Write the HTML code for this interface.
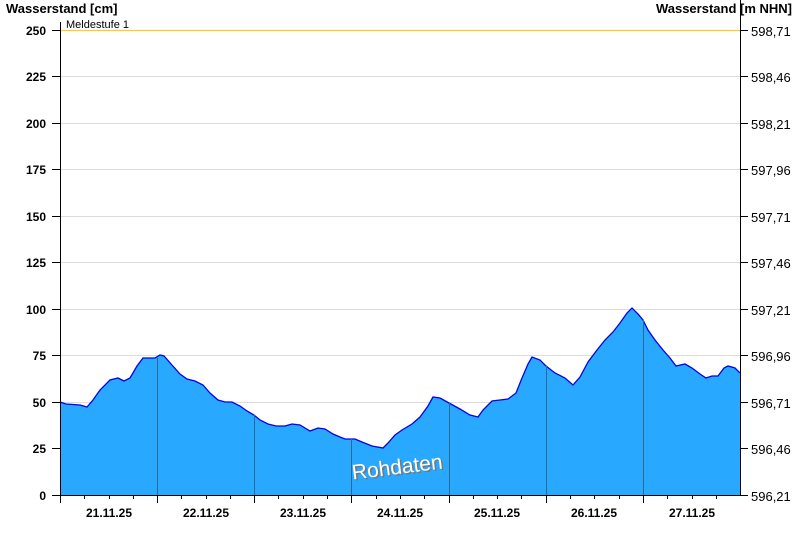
<!DOCTYPE html>
<html><head><meta charset="utf-8"><style>
html,body{margin:0;padding:0;background:#fff;width:800px;height:550px;overflow:hidden}
svg text{font-family:"Liberation Sans",Arial,sans-serif}
</style></head><body>
<svg width="800" height="550" viewBox="0 0 800 550" xmlns="http://www.w3.org/2000/svg">
<g stroke="#dcdcdc" stroke-width="1">
<line x1="60" y1="76.5" x2="740" y2="76.5"/><line x1="60" y1="123.5" x2="740" y2="123.5"/>
<line x1="60" y1="169.5" x2="740" y2="169.5"/><line x1="60" y1="216.5" x2="740" y2="216.5"/>
<line x1="60" y1="262.5" x2="740" y2="262.5"/><line x1="60" y1="309.5" x2="740" y2="309.5"/>
<line x1="60" y1="355.5" x2="740" y2="355.5"/><line x1="60" y1="402.5" x2="740" y2="402.5"/>
<line x1="60" y1="448.5" x2="740" y2="448.5"/>
</g>
<polygon fill="#29a8ff" stroke="none" points="60,495 60,402 66,404 80,405 87,407 93,400 100,390 110,380 118,378 124,381 130,378 137,366 143,358 148,358 155,358 160,355 164,356 172,365 180,374 187,379 195,381 203,385 210,393 218,400 225,402 232,402 240,406 247,411 254,415 260,420 268,424 276,426 285,426 292,424 300,425 310,431 318,428 325,429 333,434 340,437 345,439 355,439 362,442 372,446 383,448 388,443 395,435 402,430 412,424 420,417 428,406 433,397 440,398 449,403 460,409 470,415 478,417 483,410 492,401 500,400 508,399 516,393 522,378 528,364 532,357 540,360 546,366 555,373 565,378 573,385 580,377 588,362 597,350 605,340 613,332 620,323 627,313 632,308 638,314 643,320 648,330 655,340 663,350 670,358 676,366 685,364 692,368 700,374 706,378 712,376 718,376 724,368 728,366 735,368 740,373 740,495"/>
<polyline fill="none" stroke="#0000ee" stroke-width="1.3" points="60,402 66,404 80,405 87,407 93,400 100,390 110,380 118,378 124,381 130,378 137,366 143,358 148,358 155,358 160,355 164,356 172,365 180,374 187,379 195,381 203,385 210,393 218,400 225,402 232,402 240,406 247,411 254,415 260,420 268,424 276,426 285,426 292,424 300,425 310,431 318,428 325,429 333,434 340,437 345,439 355,439 362,442 372,446 383,448 388,443 395,435 402,430 412,424 420,417 428,406 433,397 440,398 449,403 460,409 470,415 478,417 483,410 492,401 500,400 508,399 516,393 522,378 528,364 532,357 540,360 546,366 555,373 565,378 573,385 580,377 588,362 597,350 605,340 613,332 620,323 627,313 632,308 638,314 643,320 648,330 655,340 663,350 670,358 676,366 685,364 692,368 700,374 706,378 712,376 718,376 724,368 728,366 735,368 740,373"/>
<g stroke="#2a6a94" stroke-width="1">
<line x1="157.5" y1="358" x2="157.5" y2="495"/><line x1="254.5" y1="415" x2="254.5" y2="495"/>
<line x1="351.5" y1="439" x2="351.5" y2="495"/><line x1="449.5" y1="403" x2="449.5" y2="495"/>
<line x1="546.5" y1="366" x2="546.5" y2="495"/><line x1="643.5" y1="320" x2="643.5" y2="495"/>
</g>
<line x1="60" y1="30.5" x2="740" y2="30.5" stroke="#ffcc22" stroke-width="1.2"/>
<g stroke="#000" stroke-width="1">
<line x1="60.5" y1="22" x2="60.5" y2="496"/><line x1="740.5" y1="0" x2="740.5" y2="496"/>
<line x1="52" y1="495.5" x2="748" y2="495.5"/>
<line x1="52" y1="30.5" x2="60" y2="30.5"/><line x1="52" y1="76.5" x2="60" y2="76.5"/><line x1="52" y1="123.5" x2="60" y2="123.5"/><line x1="52" y1="169.5" x2="60" y2="169.5"/><line x1="52" y1="216.5" x2="60" y2="216.5"/><line x1="52" y1="262.5" x2="60" y2="262.5"/><line x1="52" y1="309.5" x2="60" y2="309.5"/><line x1="52" y1="355.5" x2="60" y2="355.5"/><line x1="52" y1="402.5" x2="60" y2="402.5"/><line x1="52" y1="448.5" x2="60" y2="448.5"/>
<line x1="740" y1="30.5" x2="748" y2="30.5"/><line x1="740" y1="76.5" x2="748" y2="76.5"/><line x1="740" y1="123.5" x2="748" y2="123.5"/><line x1="740" y1="169.5" x2="748" y2="169.5"/><line x1="740" y1="216.5" x2="748" y2="216.5"/><line x1="740" y1="262.5" x2="748" y2="262.5"/><line x1="740" y1="309.5" x2="748" y2="309.5"/><line x1="740" y1="355.5" x2="748" y2="355.5"/><line x1="740" y1="402.5" x2="748" y2="402.5"/><line x1="740" y1="448.5" x2="748" y2="448.5"/>
<line x1="60.5" y1="495" x2="60.5" y2="503"/><line x1="157.5" y1="495" x2="157.5" y2="503"/><line x1="254.5" y1="495" x2="254.5" y2="503"/><line x1="351.5" y1="495" x2="351.5" y2="503"/><line x1="449.5" y1="495" x2="449.5" y2="503"/><line x1="546.5" y1="495" x2="546.5" y2="503"/><line x1="643.5" y1="495" x2="643.5" y2="503"/>
<line x1="84.5" y1="495" x2="84.5" y2="499"/><line x1="109.5" y1="495" x2="109.5" y2="499"/><line x1="133.5" y1="495" x2="133.5" y2="499"/>
<line x1="181.5" y1="495" x2="181.5" y2="499"/><line x1="206.5" y1="495" x2="206.5" y2="499"/><line x1="230.5" y1="495" x2="230.5" y2="499"/>
<line x1="278.5" y1="495" x2="278.5" y2="499"/><line x1="303.5" y1="495" x2="303.5" y2="499"/><line x1="327.5" y1="495" x2="327.5" y2="499"/>
<line x1="376.5" y1="495" x2="376.5" y2="499"/><line x1="400.5" y1="495" x2="400.5" y2="499"/><line x1="424.5" y1="495" x2="424.5" y2="499"/>
<line x1="473.5" y1="495" x2="473.5" y2="499"/><line x1="497.5" y1="495" x2="497.5" y2="499"/><line x1="521.5" y1="495" x2="521.5" y2="499"/>
<line x1="570.5" y1="495" x2="570.5" y2="499"/><line x1="594.5" y1="495" x2="594.5" y2="499"/><line x1="619.5" y1="495" x2="619.5" y2="499"/>
<line x1="667.5" y1="495" x2="667.5" y2="499"/><line x1="692.5" y1="495" x2="692.5" y2="499"/><line x1="716.5" y1="495" x2="716.5" y2="499"/>
</g>
<text x="6" y="13" font-size="13" font-weight="bold">Wasserstand [cm]</text>
<text x="792" y="13" font-size="13" font-weight="bold" text-anchor="end">Wasserstand [m NHN]</text>
<text x="66" y="28" font-size="11">Meldestufe 1</text>
<g font-size="12" font-weight="bold" text-anchor="end">
<text x="46" y="35">250</text><text x="46" y="81">225</text><text x="46" y="128">200</text><text x="46" y="174">175</text><text x="46" y="221">150</text><text x="46" y="267">125</text><text x="46" y="314">100</text><text x="46" y="360">75</text><text x="46" y="407">50</text><text x="46" y="453">25</text><text x="46" y="500">0</text>
</g>
<g font-size="13">
<text x="751" y="36">598,71</text><text x="751" y="82">598,46</text><text x="751" y="129">598,21</text><text x="751" y="175">597,96</text><text x="751" y="222">597,71</text><text x="751" y="268">597,46</text><text x="751" y="315">597,21</text><text x="751" y="361">596,96</text><text x="751" y="408">596,71</text><text x="751" y="454">596,46</text><text x="751" y="501">596,21</text>
</g>
<g font-size="12" font-weight="bold" text-anchor="middle">
<text x="109" y="517">21.11.25</text><text x="206" y="517">22.11.25</text><text x="303" y="517">23.11.25</text><text x="400" y="517">24.11.25</text><text x="497" y="517">25.11.25</text><text x="594" y="517">26.11.25</text><text x="692" y="517">27.11.25</text>
</g>
<g transform="translate(398,474) rotate(-7)" font-size="21" text-anchor="middle">
<text x="1.5" y="1.5" fill="#777">Rohdaten</text>
<text x="0" y="0" fill="#fff">Rohdaten</text>
</g>
</svg>
</body></html>
